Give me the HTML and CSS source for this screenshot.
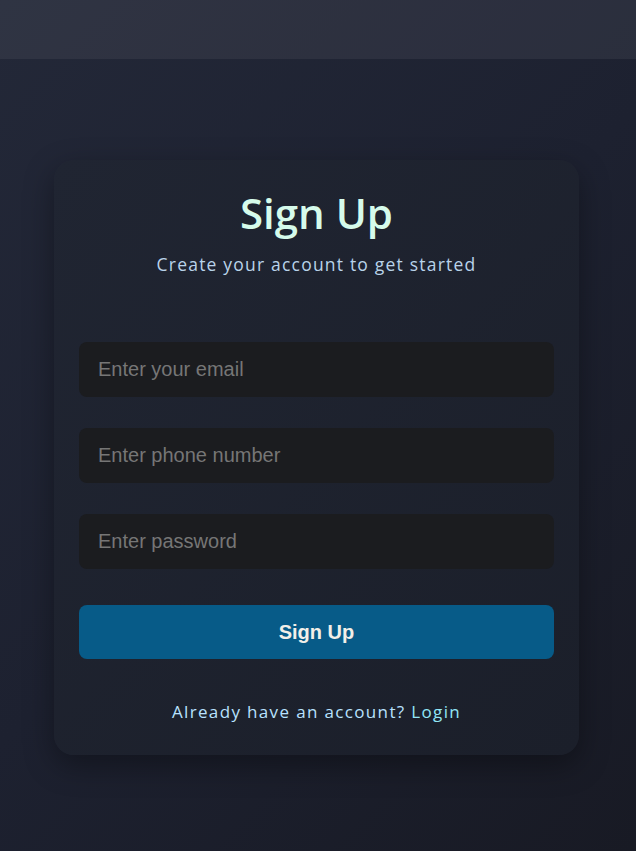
FILE: index.html
```html
<!DOCTYPE html>
<html lang="en">
<head>
<meta charset="utf-8">
<title>Sign Up</title>
<link rel="stylesheet" href="styles.css">
</head>
<body>
<header class="topbar"></header>
<main class="main">
  <section class="card">
    <h1 class="title">Sign Up</h1>
    <p class="subtitle">Create your account to get started</p>
    <form class="form">
      <input class="field" type="email" placeholder="Enter your email">
      <input class="field" type="tel" placeholder="Enter phone number">
      <input class="field" type="password" placeholder="Enter password">
      <button class="btn" type="button">Sign Up</button>
    </form>
    <p class="footer">Already have an account? <a class="link" href="#">Login</a></p>
  </section>
</main>
</body>
</html>
```

FILE: styles.css
```css
* { box-sizing: border-box; }
html, body { margin: 0; padding: 0; }
body {
  min-height: 851px;
  background: linear-gradient(135deg, #232838 0%, #1d2130 50%, #181a24 100%);
  font-family: "Poppins", "Open Sans", sans-serif;
}
.topbar {
  height: 59px;
  background: rgba(255, 255, 255, 0.06);
}
.main {
  display: flex;
  justify-content: center;
  padding-top: 101px;
}
.card {
  width: 525px;
  margin-right: 3px;
  padding: 30px 25px 31px;
  border-radius: 20px;
  background: linear-gradient(135deg, #202532 0%, #1b1f2a 100%);
  box-shadow: 0 10px 30px rgba(0, 0, 0, 0.35);
  text-align: center;
}
.title {
  margin: 0;
  font-size: 42px;
  line-height: 46px;
  font-weight: 600;
  color: #d6fbeb;
  font-family: "Open Sans", sans-serif;
}
.subtitle {
  margin: 16px 0 0;
  font-size: 17.5px;
  line-height: 24px;
  color: #b9d3ea;
  font-family: "Open Sans", sans-serif;
  letter-spacing: 1.2px;
}
.form {
  margin-top: 66px;
  display: flex;
  flex-direction: column;
  gap: 31px;
}
.field {
  display: block;
  width: 100%;
  height: 55px;
  padding: 0 19px;
  border: none;
  border-radius: 8px;
  background: #1b1c1f;
  font-family: "Liberation Sans", Arial, sans-serif;
  font-size: 20px;
  color: #dddddd;
  outline: none;
}
.field::placeholder { color: #767676; }
.btn {
  margin-top: 5px;
  height: 54px;
  width: 100%;
  border: none;
  border-radius: 8px;
  background: #075b88;
  color: #f2efe8;
  font-family: "Liberation Sans", Arial, sans-serif;
  font-weight: 700;
  font-size: 20px;
  cursor: pointer;
}
.footer {
  margin: 41px 0 0;
  font-size: 17px;
  line-height: 24px;
  color: #b8e2ff;
  font-family: "Open Sans", sans-serif;
  letter-spacing: 1.35px;
}
.link {
  color: #92e6f6;
  text-decoration: none;
}
```
